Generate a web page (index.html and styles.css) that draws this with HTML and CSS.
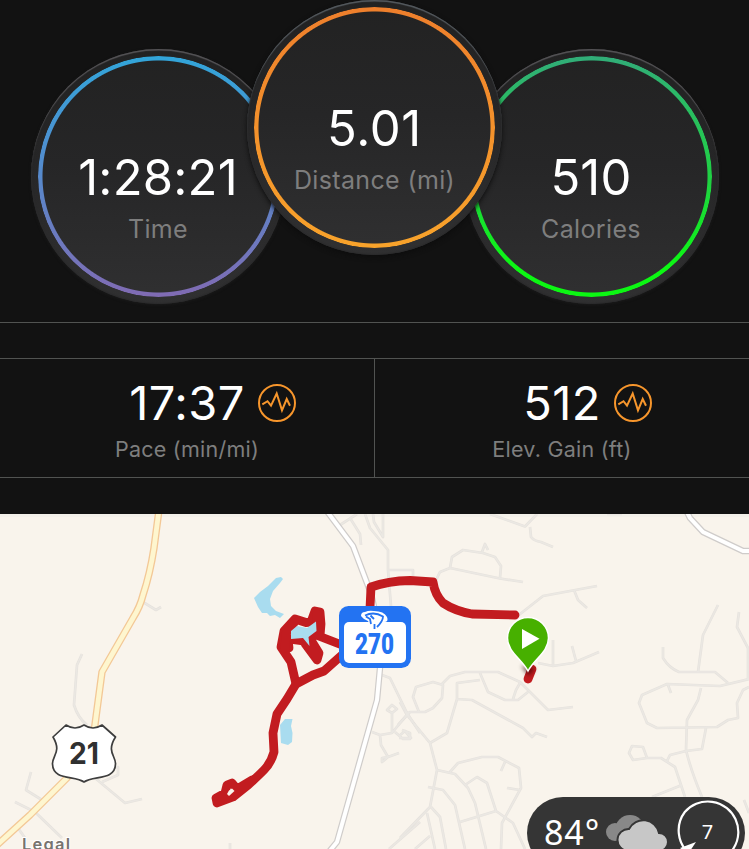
FILE: index.html
```html
<!DOCTYPE html>
<html lang="en">
<head>
<meta charset="utf-8">
<title>Activity summary</title>
<link rel="stylesheet" href="styles.css">
</head>
<body>
<main class="app">
  <section class="dials">
    <div class="dial dial-time"><div class="ring"></div><div class="dial-value">1:28:21</div><div class="dial-label">Time</div></div>
    <div class="dial dial-distance"><div class="ring"></div><div class="dial-value">5.01</div><div class="dial-label">Distance (mi)</div></div>
    <div class="dial dial-calories"><div class="ring"></div><div class="dial-value">510</div><div class="dial-label">Calories</div></div>
  </section>
  <section class="stats">
    <div class="stat">
      <div class="stat-row"><span class="stat-value">17:37</span>
        <svg class="pulse" viewBox="0 0 38 38"><circle cx="19" cy="19" r="18"/><path d="M4.3 20.3 9.5 17.2 13 21.7 18.7 9.5 24 26.3 28.7 15 32 21.7"/></svg></div>
      <div class="stat-label">Pace (min/mi)</div>
    </div>
    <div class="stat">
      <div class="stat-row"><span class="stat-value">512</span>
        <svg class="pulse" viewBox="0 0 38 38"><circle cx="19" cy="19" r="18"/><path d="M4.3 20.3 9.5 17.2 13 21.7 18.7 9.5 24 26.3 28.7 15 32 21.7"/></svg></div>
      <div class="stat-label">Elev. Gain (ft)</div>
    </div>
  </section>
  <section class="map">
    <svg class="map-art" viewBox="0 514 749 335">
      <defs>
        <filter id="soft" x="-50%" y="-50%" width="200%" height="200%"><feGaussianBlur stdDeviation="2"/></filter>
        <g id="minor">
          <path d="M490 514 525 526.500 537 514M530 527 531 537Q534 541 541 542L553 547"/>
          <path d="M435 582 440 572 450 568 500 578.500 523 582M450 568 452 557 463 550 483 553 495 557 501 566 500 578M482 552 485 544 488 550"/>
          <path d="M515 618 543 596 597 586M574 590 578 600 587 608M538 663 553 666 573 663 599 652M553 640V665M572 646 576 661"/>
          <path d="M718 605 703 635 698 672M739 612 737 627 748 648V680M663 647V658Q669 668 679 672H715L728 683"/>
          <path d="M749 679 720 686 667 684 642 695 639 703 647 723 657 728 717 727 728 720 738 718 737 703 743 690 749 687M668 685 671 693M701 688 698 700 687 720 686 750Q691 771 702 797"/>
          <path d="M706 728 702 749 686 751 670 755 667 761M647 758 633 760 629 753 632 746 643 747 647 758 661 758 675 767 685 797M682 785 652 797M744 800 749 813"/>
          <path d="M400 702 407 715 430 743 437 770 430 807 400 838M419 712 413 697 416 687 433 682 443 685 442 698 433 708 425 712H410L398 725"/>
          <path d="M442 684 450 676 465 672H498L520 682 548 710 573 707M480 673 488 692 505 700H518L528 692M520 683 516 690 513 699"/>
          <path d="M480 680 457 683V699L447 733 430 743M457 699 472 700 523 728 532 737 536 733 547 737"/>
          <path d="M437 770 455 774 468 788 475 803 486 849M450 772 458 763 482 757H498L519 768 521 788 502 823 501 849M505 762 501 771M507 788 520 790"/>
          <path d="M465 785 477 777 487 783 496 811 513 823 525 849M460 822 496 811M428 787 443 790 455 805 465 849M427 813 435 849M431 807 440 817 446 849M415 849 430 836M389 849 420 822M230 843V849"/>
          <path d="M382 675 390 678 407 713 420 733M372 732 380 735 392 733 409 712M392 733V713L387 710 392 705 397 709 392 713M395 732 403 739 410 739V733L402 730M380 735 381 745 388 757 399 753M388 757 382 762 382 758 388 757M399 738H411L405 731 399 736"/>
          <path d="M340 525 357 514M350 518 360 534 361 545M365 514 370 528 388 550V570L391 606M373 514 374 522 383 537V514M389 570H413V576M607 514 622 514"/>
          <path d="M143 602 156 610 161 607M82 654 77 665 74 705Q78 718 87 725M31 772 26 790 42 800M15 802 35 812 62 838M95 778 125 803 142 799M102 782 118 775V767H113M18 828 25 838"/>
        </g>
        <path id="trunk" d="M326 510 353 546 367 583Q379 612 380 668L377 700 337 842 328 853"/>
        <path id="east" d="M686 510 690 518 703 532 743 551H753"/>
        <path id="highway" d="M159 510 154 548Q150 574 143 595 140 607 133 618L102 672 94 732 67 778 30 815-4 846"/>
      </defs>
      <rect y="514" width="749" height="335" fill="#f9f4ec"/>
      <rect y="514" width="749" height="3" fill="#f3f0e9"/>
      <use href="#minor" class="minor-edge"/>
      <use href="#minor" class="minor-fill"/>
      <use href="#trunk" class="trunk-edge"/><use href="#trunk" class="trunk-fill"/>
      <use href="#east" class="trunk-edge"/><use href="#east" class="trunk-fill"/>
      <use href="#highway" class="highway-edge"/><use href="#highway" class="highway-fill"/>
      <g fill="#a9dcef">
        <path d="M281 577 276 578 268 586 260 592 254 598 258 607 262 613 267 613 270 616 275 615 280 618 284 614 276 611 271 606 270 599 273 591 280 583 283 579Z"/>
        <path d="M280 725 285 719 292.500 719 291 726 292.500 733 292 742 288 745 281 743Z"/>
      </g>
      <g class="route">
        <path d="M515 615 472 614Q455 611 443 603 435 595 433 582L410 580.500Q388 581 371 587L370 608"/>
        <path d="M342 645 320 636.500 321 624 320 612 315 611 311 622 306 622.500 295 619 284 631 281 647 291 662 296 684M289 648 288 639 303 641 317 660 319 653 311 640 316 633"/>
        <path d="M294 623 286 634 285 648M307 642 317 657M317 614 318 634"/>
        <path d="M342 655 324 671 313 675 296 684 287 699 277 714 273 733 274 752Q271 763 264 770 254 780 248 785L233 797 217 803 216 798 225 793 227 785 232 783 237 789 252 780"/>
        <path d="M528 679 532 669"/>
      </g>
      <path d="M227 794 229 790.500 232 788.500 234.500 791 229 796Z" fill="#f9f4ec"/>
      <path d="M291 631 297 626 307 628 316 621.500 316.500 631 308.500 637 309.500 646 303 638 291 639Z" fill="#a9dcef"/>

      <path d="M521 666 535 668 529 676Z" fill="#300" opacity=".65" filter="url(#soft)"/>
      <path d="M528 671C522 659 507.500 652 507.500 638A20.500 20.500 0 0 1 548.500 638C548.500 652 534 659 528 671Z" fill="#47b000" stroke="#fff" stroke-width="1.500"/>
      <path d="M522 629 539.500 638.700 522 649Z" fill="#fff"/>

      <rect x="339" y="606" width="72" height="62" rx="9.500" fill="#2373f2"/>
      <rect x="344" y="622" width="62" height="41" rx="5" fill="#fff"/>
      <path d="M361 616Q361 612 365 612 369 610 374 611 384 611 387 617 389 622 384 622L374 629 370 625 368 621 364 619Z" fill="#fff"/>
      <path d="M365 615.500Q374 611 383 616.500 383 621 377 627M366 616.500 370 619 371 624" fill="none" stroke="#2373f2" stroke-width="1.800"/>
      <circle cx="375" cy="621" r="3" fill="#fff"/><path d="M370.500 615.500 374 619M374.500 624V629" stroke="#2373f2" stroke-width="1.800"/>
      <text x="355" y="654" class="route-no" textLength="39" lengthAdjust="spacingAndGlyphs">270</text>

      <path d="M66 725Q75 731 84 725 93 731 102 725L115.500 737C106 752 116 756 115.500 764 115 781 93 775 84 782 75 775 53 781 52.500 764 52 756 62 752 53 737Z" fill="#fff" stroke="#3e3e3e" stroke-width="1.700" stroke-linejoin="round"/>
      <text x="69" y="763.500" class="us-no" textLength="30" lengthAdjust="spacingAndGlyphs">21</text>
      <text x="22" y="849.500" class="place" textLength="48">Legal</text>
    </svg>
    <div class="weather">
      <span class="temp">84°</span>
      <svg class="clouds" viewBox="0 0 64 36">
        <g fill="#888"><circle cx="9" cy="17" r="9"/><circle cx="24" cy="15" r="15"/></g>
        <path d="M22 36A11 11 0 0 1 23 14 16 16 0 0 1 53 18 9 9 0 0 1 53 36Z" fill="#c7c7c7" stroke="#353535" stroke-width="2"/>
      </svg>
      <svg class="wind" viewBox="0 0 64 64"><path d="M13.300 53.500A30.500 30.500 0 0 1 8.800 12 30.500 30.500 0 1 1 32 62.500" fill="none" stroke="#fff" stroke-width="2.200"/><path d="M4 48 20 42 12 54Z" fill="#fff"/><text x="31.500" y="38.500" text-anchor="middle" class="wind-no">7</text></svg>
    </div>
  </section>
</main>
</body>
</html>
```

FILE: styles.css
```css
* { box-sizing: border-box; }
body { margin: 0; background: #121212; font-family: Inter, "Liberation Sans", sans-serif; }
.app { width: 749px; height: 849px; overflow: hidden; background: #121212; }

.dials { display: flex; justify-content: center; align-items: flex-start; height: 323px; border-bottom: 1px solid #515351; }
.dial {
  position: relative; flex: none; width: 255px; height: 255px; margin-top: 49px; padding-top: 99px;
  border-radius: 50%; text-align: center;
  background: linear-gradient(#222 0%, #262627 45%, #303031 100%);
  box-shadow: inset 0 2px 1px -0.5px #555457, inset 0 0 1px 1px #2b2b2c, 0 1px 3px #1b1b1b;
}
.dial-distance { z-index: 1; margin: -0.5px -38.5px 0; box-shadow: inset 0 2px 1px -0.5px #555b60, inset 0 0 1px 1px #2b2b2c, 0 2px 5px #0d0d0d; }
.ring {
  position: absolute; inset: 7px; border-radius: 50%;
  mask: radial-gradient(closest-side, transparent calc(100% - 5px), #000 calc(100% - 4px));
}
.dial-time .ring { background: linear-gradient(#32a5d9, #4f8fd0 40%, #806bb3); }
.dial-distance .ring { background: linear-gradient(#ee7f2c, #f8a32b); }
.dial-calories .ring { background: linear-gradient(#31ad78, #20d044 50%, #0cf713 88%); }
.dial-value { color: #fff; font-size: 49px; font-weight: 400; line-height: 60px; letter-spacing: .2px; }
.dial-distance .dial-value { letter-spacing: .7px; }
.dial-label { color: #7e7e7e; font-size: 25px; font-weight: 400; line-height: 32px; margin-top: 5px; letter-spacing: .35px; }

.stats { display: flex; height: 120px; margin-top: 35px; border-top: 1px solid #515351; border-bottom: 1px solid #515351; }
.stat { flex: 1; padding-top: 14px; text-align: center; }
.stat:first-child { border-right: 1px solid #515351; }
.stat-row { display: grid; grid-template-columns: 1fr auto 1fr; align-items: center; column-gap: 13px; height: 60px; }
.stat-value { grid-column: 2; color: #fff; font-size: 47px; font-weight: 400; line-height: 60px; letter-spacing: .4px; }
.pulse { width: 38px; height: 38px; fill: none; stroke: #f7962c; stroke-width: 2; }
.stat-label { color: #7e7e7e; font-size: 21.5px; font-weight: 400; line-height: 30px; margin-top: 1px; letter-spacing: .25px; }

.map { position: relative; height: 335px; margin-top: 36px; overflow: hidden; }
.map-art { display: block; width: 749px; height: 335px; }
.minor-edge, .minor-fill, .trunk-edge, .trunk-fill, .highway-edge, .highway-fill { fill: none; stroke-linejoin: round; }
.minor-edge { stroke: #e6e2dd; stroke-width: 2.7; }
.minor-fill { stroke: #ebe8e3; stroke-width: 1.4; }
.trunk-edge { stroke: #cfccca; stroke-width: 6.4; }
.trunk-fill { stroke: #fff; stroke-width: 4; }
.highway-edge { stroke: #f3c896; stroke-width: 7.4; }
.highway-fill { stroke: #fef6cf; stroke-width: 4.8; }
.route { fill: none; stroke: #c21c20; stroke-width: 8.8; stroke-linecap: round; stroke-linejoin: round; }
.route-no { font: 900 29px Roboto, sans-serif; fill: #2373f2; }
.us-no { font: 700 30px Inter, sans-serif; fill: #303030; }
.place { font: 600 16.5px Inter, sans-serif; fill: #77736f; stroke: #fff; stroke-width: 2px; paint-order: stroke; }

.weather {
  position: absolute; left: 527px; top: 283px; width: 218px; height: 72px; border-radius: 36px;
  display: flex; align-items: flex-start; background: #353535;
}
.temp { width: 79px; padding: 18px 0 0 17px; color: #fff; font: 34px/34px "Noto Sans", sans-serif; letter-spacing: .9px; white-space: nowrap; }
.clouds { width: 64px; height: 36px; margin-top: 18px; }
.wind { width: 64px; height: 64px; margin: 3px 0 0 6px; overflow: visible; }
.wind-no { font: 20px "Noto Sans", sans-serif; fill: #fff; }
```
